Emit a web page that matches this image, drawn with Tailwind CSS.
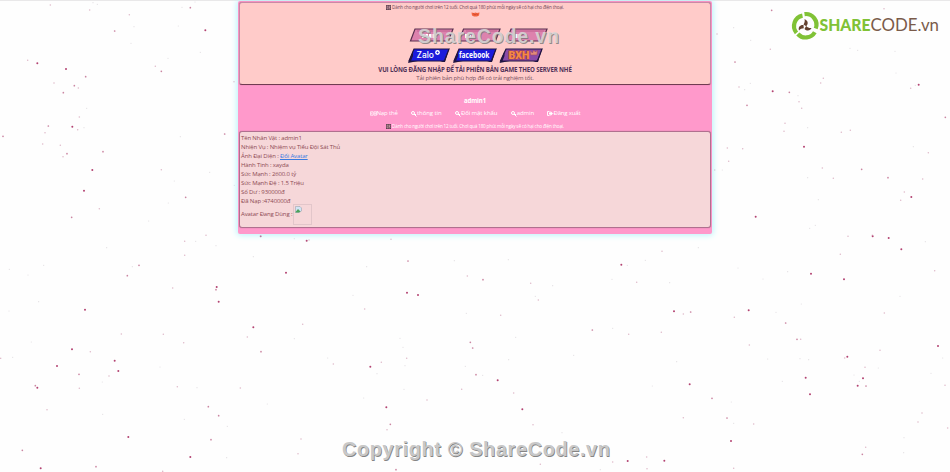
<!DOCTYPE html>
<html lang="vi">
<head>
<meta charset="utf-8">
<title>admin1</title>
<script src="https://cdn.jsdelivr.net/npm/@tailwindcss/browser@4"></script>
</head>
<body class="relative h-[472px] w-[950px] overflow-hidden bg-[#fefefe] font-['Open_Sans','Noto_Sans',sans-serif]">
<svg id="petals" class="absolute inset-0 h-full w-full" viewBox="0 0 950 472"></svg>
<div class="absolute inset-x-0 top-0 h-px bg-[#e9e8e9]"></div>

<main class="relative mx-auto mt-px flex h-[233px] w-[474px] flex-col rounded-[2px] bg-[#ff99cb] px-px pt-px shadow-[0_0_6px_1px_#b5f3fb]">
  <section class="flex h-[83px] shrink-0 flex-col items-center rounded-[3px] border border-[#c98aa6] border-b-[#713b51] bg-[#ffcbc9] text-[#6f4658] shadow-[0_0_1px_#a05a7c]">
    <p class="flex h-[9px] items-center gap-px text-[4.6px] tracking-[-0.16px] whitespace-nowrap">
      <svg class="h-[5px] w-[5px]" viewBox="0 0 10 10"><rect width="10" height="10" rx="1" fill="#593c4c"/><path d="M2 2h2v6H2zM5 2h3v2H6v1h2v3H5" fill="none" stroke="#e9b9bf"/></svg>
      <span>Dành cho người chơi trên 12 tuổi. Chơi quá 180 phút mỗi ngày sẽ có hại cho điện thoại.</span>
    </p>
    <svg class="h-[5px] w-[9px]" viewBox="0 0 18 10"><path d="M1 1l5 1 3-1 3 1 5-1-1 6-4 2H6L2 7z" fill="#f3653f"/><path d="M4 3l4 3 3-2 3 2" fill="none" stroke="#b52f29"/></svg>
    <svg class="mt-[10px] h-[38px] w-[147px]" viewBox="-6 0 147 38">
      <g stroke="#5a3150" stroke-width="1.200" fill="#dd82ad">
        <path d="M7 2h38l-4.500 12H2.500z"/><path d="M55.500 2h36.500l-4.500 12H51z"/><path d="M103 2h36l-4.500 12H98.500z"/>
      </g>
      <g fill="none" stroke="#c0608f"><path d="M9 4h33M58 4h31M105 4h31"/></g>
      <path d="M14 9h15M57 9h9M107 9h7" stroke="#fff" stroke-width="4" stroke-dasharray="2.500 1"/>
      <g stroke="#211542" stroke-width="1.200">
        <path d="M6 22h35l-4.500 12H1z" fill="#1b1bdc"/><path d="M51 22h37l-4.500 12H46z" fill="#1b1bdc"/><path d="M98 22h36l-4.500 12H92.500z" fill="#8a4aa8"/>
      </g>
      <g fill="#211542"><path d="M0 36l5-12v5l-2 5h7zM45 36l5-12v5l-2 5h7zM91.500 36l5-12v5l-2 5h7z"/><path d="M41.500 20.500L37 35h-5l4-1.500zM88.500 20.500L84 35h-5l4-1.500zM134.500 20.500L130 35h-5l4-1.500z"/></g>
      <text x="8.500" y="31" font-family="Inter,sans-serif" font-size="8.500" font-weight="500" fill="#fff" textLength="17.500" lengthAdjust="spacingAndGlyphs">Zalo</text>
      <circle cx="29.500" cy="25.500" r="2.400" fill="#fff"/><path d="M28.500 25.500h2M29.500 24.500v2" stroke="#1b1bdc" stroke-width="1"/>
      <text x="51" y="31" font-family="Open Sans,sans-serif" font-size="8" font-weight="700" fill="#fff" textLength="30.500" lengthAdjust="spacingAndGlyphs">facebook</text>
      <text x="100.500" y="32" font-family="Roboto,sans-serif" font-size="10.500" font-weight="900" fill="#f48a45" stroke="#a43d43" stroke-width="1" paint-order="stroke" textLength="21" lengthAdjust="spacingAndGlyphs">BXH</text>
      <path d="M122 23.500l2.500 2.500 1-3 2 2 2-2-.5 5h-6.500z" fill="#e08a78" stroke="#9d4667" stroke-width=".6"/>
    </svg>
    <p class="h-[9px] text-[6.1px] leading-[9px] font-bold tracking-[-0.13px] whitespace-nowrap text-[#523258]">VUI LÒNG ĐĂNG NHẬP ĐỂ TẢI PHIÊN BẢN GAME THEO SERVER NHÉ</p>
    <p class="h-[9px] text-[6px] leading-[9px] tracking-[-0.16px] whitespace-nowrap text-[#76505e]">Tải phiên bản phù hợp để có trải nghiệm tốt.</p>
  </section>

  <div class="flex h-[46px] shrink-0 flex-col items-center text-white">
    <p class="mt-[11px] h-[9px] text-[6.1px] leading-[9px] font-bold tracking-[-0.15px]">admin1</p>
    <nav class="mt-[4px] flex h-[9px] w-[211px] justify-between text-[6px] leading-[9px] tracking-[-0.08px] whitespace-nowrap">
      <a class="flex items-center tracking-[-0.16px]"><svg class="h-[5px] w-[7px]" viewBox="0 0 16 10"><path d="M1 1h6v8H1zM9 1h6v8H9zM3 3v4M11 3v4M13 3v4" fill="none" stroke="#fff" stroke-width="1.500"/></svg>Nạp thẻ</a>
      <a class="flex items-center"><svg class="h-[6px] w-[6px]" viewBox="0 0 12 12"><circle cx="4" cy="4" r="3" fill="none" stroke="#fff" stroke-width="2"/><path d="M6 6l5 5M8 8l2-2" stroke="#fff" stroke-width="2"/></svg>thông tin</a>
      <a class="flex items-center"><svg class="h-[6px] w-[6px]" viewBox="0 0 12 12"><circle cx="4" cy="4" r="3" fill="none" stroke="#fff" stroke-width="2"/><path d="M6 6l5 5M8 8l2-2" stroke="#fff" stroke-width="2"/></svg>Đổi mật khẩu</a>
      <a class="flex items-center"><svg class="h-[6px] w-[6px]" viewBox="0 0 12 12"><circle cx="4" cy="4" r="3" fill="none" stroke="#fff" stroke-width="2"/><path d="M6 6l5 5M8 8l2-2" stroke="#fff" stroke-width="2"/></svg>admin</a>
      <a class="flex items-center tracking-[-0.16px]"><svg class="h-[5px] w-[6px]" viewBox="0 0 12 10"><path d="M5 1H1v8h4" fill="none" stroke="#fff" stroke-width="1.800"/><path d="M4 3h3V0l5 5-5 5V7H4z" fill="#fff"/></svg>Đăng xuất</a>
    </nav>
    <p class="mt-[5px] flex h-[7px] items-center gap-px text-[4.6px] leading-[7px] tracking-[-0.16px] whitespace-nowrap">
      <svg class="h-[5px] w-[5px]" viewBox="0 0 10 10"><rect width="10" height="10" rx="1" fill="#593c4c"/><path d="M2 2h2v6H2zM5 2h3v2H6v1h2v3H5" fill="none" stroke="#e9b9bf"/></svg>
      <span>Dành cho người chơi trên 12 tuổi. Chơi quá 180 phút mỗi ngày sẽ có hại cho điện thoại.</span>
    </p>
  </div>

  <section class="h-[97px] shrink-0 rounded-[3px] border border-[#b0708f] bg-[#f6d7d9] pt-[2px] pl-px text-[6px] leading-[9px] tracking-[-0.14px] text-[#8d4a53] shadow-[0_0_1px_#a05a7c]">
    <p>Tên Nhân Vật : admin1</p>
    <p>Nhiện Vụ : Nhiệm vụ Tiểu Đội Sát Thủ</p>
    <p>Ảnh Đại Diện : <a class="text-[#3b7be0] underline">Đổi Avatar</a></p>
    <p>Hành Tinh : xayda</p>
    <p>Sức Mạnh : 2600.0 tỷ</p>
    <p>Sức Mạnh Đệ : 1.5 Triệu</p>
    <p>Số Dư : 930000đ</p>
    <p>Đã Nạp :4740000đ</p>
    <div class="-mt-[2px] flex h-[21px] items-center gap-px"><span>Avatar Đang Dùng :</span>
      <span class="h-[21px] w-[19px] border border-[#e2c6ca] p-px"><svg class="h-[7px] w-[7px]" viewBox="0 0 14 14"><path d="M1 1h9l3 3v6l-5 3H1z" fill="#d2e4f5" stroke="#8f9aa5"/><path d="M1 12l5-6 5 5-3 2H1z" fill="#4ba25c"/></svg></span>
    </div>
  </section>
</main>

<svg class="absolute top-0 left-0 h-[472px] w-[950px]" viewBox="0 0 950 472">
  <g font-family="Liberation Sans,Arial,sans-serif" font-weight="700">
    <g font-size="19.500"><text x="418.800" y="43.800" textLength="141" fill="#777" fill-opacity=".8">ShareCode.vn</text><text x="418" y="43" textLength="141" fill="#d9d6d7" fill-opacity=".9">ShareCode.vn</text></g>
    <g font-size="20"><text x="342.700" y="456.700" textLength="268" fill="#858585">Copyright © ShareCode.vn</text><text x="342" y="456" textLength="268" fill="#c8c8c8">Copyright © ShareCode.vn</text></g>
  </g>
  <g fill="none" stroke="#80c236" stroke-width="4.200">
    <path d="M804.500 14.100A10.600 10.600 0 0 1 815.700 28.500"/>
    <path d="M814.800 32.200A10.600 10.600 0 0 1 797.800 34"/>
    <path d="M796.500 32.800A10.600 10.600 0 0 1 802.500 15.600"/>
  </g>
  <g fill="#62412f"><path d="M804.500 19c3.500 1.500 4.300 4.500 1.700 7.200L803.500 24.500c1-1.500 1.600-3.500 1-5.500z"/><path d="M811.500 28c-1 2.800-4.500 3.500-7 1l1.600-3c1.700 1.700 3.500 2.300 5.400 2z"/><path d="M799 30.500c-1-3.500 1-5.800 4.500-5.500l.3 3.200c-2 0-3.500.8-4.800 2.300z"/></g>
  <g font-size="16.500"><text x="819.500" y="31.300" font-family="Lato,sans-serif" font-weight="900" fill="#80c236" textLength="51" lengthAdjust="spacingAndGlyphs">SHARE</text><text x="870.500" y="31.300" font-family="Lato,sans-serif" fill="#7a5b4a" textLength="68.500" lengthAdjust="spacingAndGlyphs">CODE.vn</text></g>
</svg>

<script>
// Falling petals: x, y, strength (1 faint - 4 dark) in thirds of a pixel, grouped by tile origin.
const tiles = [
 [0,0,"151,15,2 269,30,2 292,13,1 279,8,1 388,44,2 344,93,3 402,80,1 393,130,1 546,22,1 571,23,3 535,78,1 616,91,4 585,6,1 83,181,2 112,190,4 198,207,4 257,230,3 162,249,2 223,257,3 235,264,2 190,278,3 260,325,1 238,351,2 145,378,3 217,380,4 233,389,2 252,383,1 135,398,2 9,409,3 128,432,2 181,436,2 201,461,3 189,470,2 309,455,3 277,510,4 252,572,4 298,626,2 215,652,3 446,663,1 466,199,2 484,214,3 504,175,1 601,157,1 674,402,3 702,245,2 541,410,1 484,509,2 629,517,1 523,543,1 557,592,3 505,609,1 618,706,2 703,556,1"],
 [0,236,"28,100,1 84,117,1 27,225,1 94,318,1 38,364,1 2,367,2 116,197,1 131,88,1 320,35,1 255,221,4 216,340,4 171,390,4 106,449,3 112,455,4 237,415,3 238,457,2 271,347,2 344,374,4 355,405,4 327,420,2 307,438,1 364,294,2 382,119,3 397,92,1 417,88,3 554,16,2 587,16,1 554,58,2 518,156,2 648,29,1 650,153,4 648,161,3 656,197,4 490,295,2 551,320,2 782,1,4 760,62,1 883,8,1 920,14,4 927,12,2 858,110,4 760,274,4 742,303,2 783,347,3 908,265,2 883,308,1 721,456,2 532,452,2 480,393,1 591,455,1 625,512,3 656,539,3 553,550,1 633,611,3 571,663,4 680,665,1 802,504,1 903,609,2 894,653,2 385,603,4 141,521,2 308,535,1 67,643,3 122,697,4 288,692,3 488,706,2 682,571,1"],
 [316,236,"225,10,2 276,75,3 152,92,1 415,74,1 454,120,2 501,131,3 577,71,1 273,170,4 306,177,4 146,219,2 111,178,1 451,232,1 554,238,2 644,142,2 710,149,1 667,192,2 658,181,1 916,86,4 934,88,1 888,130,1 829,282,3 890,277,1 938,295,2 463,319,3 470,336,3 252,307,1 261,334,1 272,367,2 267,389,1 52,384,2 35,366,1 163,392,4 196,379,2 183,413,1 480,416,3 500,418,1 448,391,1 545,433,4 437,460,2 593,471,2 578,371,1 599,304,1 773,358,1 264,460,1 333,492,2 211,514,4 223,565,3 213,581,2 619,520,4 651,566,2 143,486,1 240,701,3 673,685,2 935,675,4 890,678,2 853,701,1 738,590,1"],
 [632,236,"90,46,2 199,35,1 40,73,1 14,139,2 113,140,1 318,96,1 393,129,1 467,107,1 537,113,4 636,130,4 648,1,2 722,1,4 770,6,4 808,40,4 880,17,1 625,55,2 908,104,2 804,181,1 757,231,2 126,226,4 154,234,2 176,228,3 350,223,4 307,244,2 432,229,1 508,204,1 461,261,3 88,289,2 352,327,2 495,310,3 506,310,2 504,368,1 530,371,1 407,369,1 918,330,4 932,366,1 744,343,2 646,362,4 638,366,2 699,394,2 739,396,1 666,417,1 693,427,4 677,449,4 702,450,3 682,436,1 521,425,4 451,436,1 534,475,4 173,445,4 61,450,1 240,487,3 154,545,2 285,546,3 134,377,1 305,562,1 365,564,2 297,615,4 44,663,2 97,674,4 45,698,2 305,697,2 701,634,2 691,655,3 815,650,1 816,605,1 858,558,2 870,531,2 939,448,2 947,576,2 897,412,1 298,498,1"],
 [710,0,"185,31,3 522,26,2 21,102,2 181,148,2 75,186,3 71,83,1 122,121,1 420,145,1 443,151,1 555,154,1 558,219,1 626,254,4 602,265,2 616,256,1 340,235,2 332,249,2 87,261,2 104,269,1 121,250,1 188,274,4 238,277,3 264,287,1 267,305,2 275,325,2 111,316,3 225,370,2 222,394,2 293,383,1 394,397,2 421,391,2 706,352,3 282,440,4 98,446,2 52,444,2 56,484,2 14,510,2 37,510,1 337,504,2 370,535,2 455,508,3 534,533,3 610,440,1 655,458,2 638,537,2 583,576,2 604,591,4 572,601,2 325,599,1 293,533,1 137,650,4 299,685,1 316,676,1 487,706,2"]
];
const tone = ["", "#c9c2c9", "#c4809c", "#b5527a", "#ab2f63"];
const svg = document.getElementById("petals");
for (const [ox, oy, list] of tiles) for (const p of list.split(" ")) {
  const [x, y, s] = p.split(",").map(Number);
  const c = document.createElementNS("http://www.w3.org/2000/svg", "circle");
  c.setAttribute("cx", ox + x / 3); c.setAttribute("cy", oy + y / 3);
  c.setAttribute("r", [0, .6, .75, .85, 1][s]); c.setAttribute("fill", tone[s]);
  c.setAttribute("fill-opacity", [0, .5, .55, .7, .9][s]);
  svg.append(c);
}
</script>
</body>
</html>
